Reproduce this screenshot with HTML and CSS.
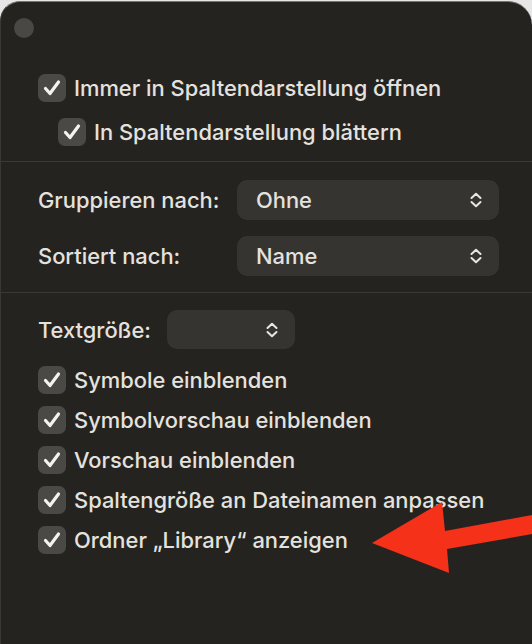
FILE: index.html
```html
<!DOCTYPE html>
<html lang="de">
<head>
<meta charset="utf-8">
<title>Darstellungsoptionen</title>
<link rel="stylesheet" href="styles.css">
</head>
<body>
<div class="window">
  <div class="titlebar"><span class="dot"></span></div>

  <section class="section first">
    <label class="check-row"><span class="box"><svg viewBox="0 0 28 28"><path d="M7.5 14.5 L12 19.5 L20.5 8" /></svg></span><span class="text">Immer in Spaltendarstellung öffnen</span></label>
    <label class="check-row indent"><span class="box"><svg viewBox="0 0 28 28"><path d="M7.5 14.5 L12 19.5 L20.5 8" /></svg></span><span class="text">In Spaltendarstellung blättern</span></label>
  </section>

  <section class="section second">
    <div class="form-row">
      <span class="label">Gruppieren nach:</span>
      <div class="popup wide"><span class="value">Ohne</span><svg class="chev" viewBox="0 0 12 16"><path d="M1.5 6 L6 1.8 L10.5 6 M1.5 10 L6 14.2 L10.5 10" /></svg></div>
    </div>
    <div class="form-row">
      <span class="label">Sortiert nach:</span>
      <div class="popup wide"><span class="value">Name</span><svg class="chev" viewBox="0 0 12 16"><path d="M1.5 6 L6 1.8 L10.5 6 M1.5 10 L6 14.2 L10.5 10" /></svg></div>
    </div>
  </section>

  <section class="section third">
    <div class="size-row">
      <span class="label short">Textgröße:</span>
      <div class="popup small"><span class="value"></span><svg class="chev" viewBox="0 0 12 16"><path d="M1.5 6 L6 1.8 L10.5 6 M1.5 10 L6 14.2 L10.5 10" /></svg></div>
    </div>
    <div class="checks">
      <label class="check-row tight"><span class="box"><svg viewBox="0 0 28 28"><path d="M7.5 14.5 L12 19.5 L20.5 8" /></svg></span><span class="text">Symbole einblenden</span></label>
      <label class="check-row tight"><span class="box"><svg viewBox="0 0 28 28"><path d="M7.5 14.5 L12 19.5 L20.5 8" /></svg></span><span class="text">Symbolvorschau einblenden</span></label>
      <label class="check-row tight"><span class="box"><svg viewBox="0 0 28 28"><path d="M7.5 14.5 L12 19.5 L20.5 8" /></svg></span><span class="text">Vorschau einblenden</span></label>
      <label class="check-row tight"><span class="box"><svg viewBox="0 0 28 28"><path d="M7.5 14.5 L12 19.5 L20.5 8" /></svg></span><span class="text">Spaltengröße an Dateinamen anpassen</span></label>
      <label class="check-row tight"><span class="box"><svg viewBox="0 0 28 28"><path d="M7.5 14.5 L12 19.5 L20.5 8" /></svg></span><span class="text">Ordner „Library“ anzeigen</span></label>
    </div>
  </section>
</div>

<svg class="annotation" viewBox="0 0 532 644" aria-hidden="true">
  <polygon points="372,543 442,502 445,531 532,515 532,534 447,549 449,573" />
</svg>
</body>
</html>
```

FILE: styles.css
```css
* { box-sizing: border-box; }

html, body {
  margin: 0;
  padding: 0;
  width: 532px;
  height: 644px;
  overflow: hidden;
  background: #e6e6e6;
}

body {
  font-family: Inter, "Noto Sans", "Liberation Sans", sans-serif;
  font-weight: 450;
  color: #e4e2de;
  position: relative;
}

.window {
  margin-top: 1px;
  height: 643px;
  background: #252320;
  border-top: 1.5px solid #77756f;
  border-left: 1px solid #3a3834;
  border-radius: 20px 24px 0 0;
  display: flex;
  flex-direction: column;
}

.titlebar {
  height: 54px;
  padding: 16px 0 0 13px;
}

.dot {
  display: block;
  width: 20px;
  height: 20px;
  border-radius: 50%;
  background: #4a4845;
}

.section {
  border-bottom: 1.5px solid #3b3935;
  padding: 0 34px 0 37px;
}

.section.first {
  padding-top: 10px;
  padding-bottom: 7px;
}

.section.second {
  padding-top: 18px;
  padding-bottom: 16px;
  display: flex;
  flex-direction: column;
  gap: 16px;
}

.section.third {
  border-bottom: none;
  padding-top: 17px;
}

.check-row {
  display: flex;
  align-items: center;
  gap: 8px;
  height: 44px;
  font-size: 21.9px;
}

.check-row.indent {
  padding-left: 20px;
}

.check-row.tight {
  height: 40px;
}

.box {
  width: 28px;
  height: 28px;
  border-radius: 7px;
  background: #4b4946;
  flex: none;
  display: flex;
}

.box svg {
  width: 28px;
  height: 28px;
}

.box path {
  fill: none;
  stroke: #f4f3f1;
  stroke-width: 3.2;
  stroke-linecap: round;
  stroke-linejoin: round;
}

.form-row {
  display: grid;
  grid-template-columns: 199px 262px;
  align-items: center;
  height: 40px;
  font-size: 21.9px;
}

.popup {
  height: 40px;
  border-radius: 10px;
  background: #363430;
  display: flex;
  align-items: center;
  justify-content: space-between;
  padding: 0 17px 0 19px;
  font-size: 21.9px;
}

.popup.small {
  width: 128px;
  height: 39px;
}

.chev {
  width: 12px;
  height: 16px;
  flex: none;
}

.chev path {
  fill: none;
  stroke: #e8e6e2;
  stroke-width: 2;
  stroke-linecap: round;
  stroke-linejoin: round;
}

.size-row {
  display: flex;
  align-items: center;
  height: 39px;
  margin-bottom: 11px;
  font-size: 21.9px;
}

.label.short {
  width: 129px;
}

.annotation {
  position: absolute;
  left: 0;
  top: 0;
  width: 532px;
  height: 644px;
  pointer-events: none;
}

.annotation polygon {
  fill: #f5311a;
}
```
